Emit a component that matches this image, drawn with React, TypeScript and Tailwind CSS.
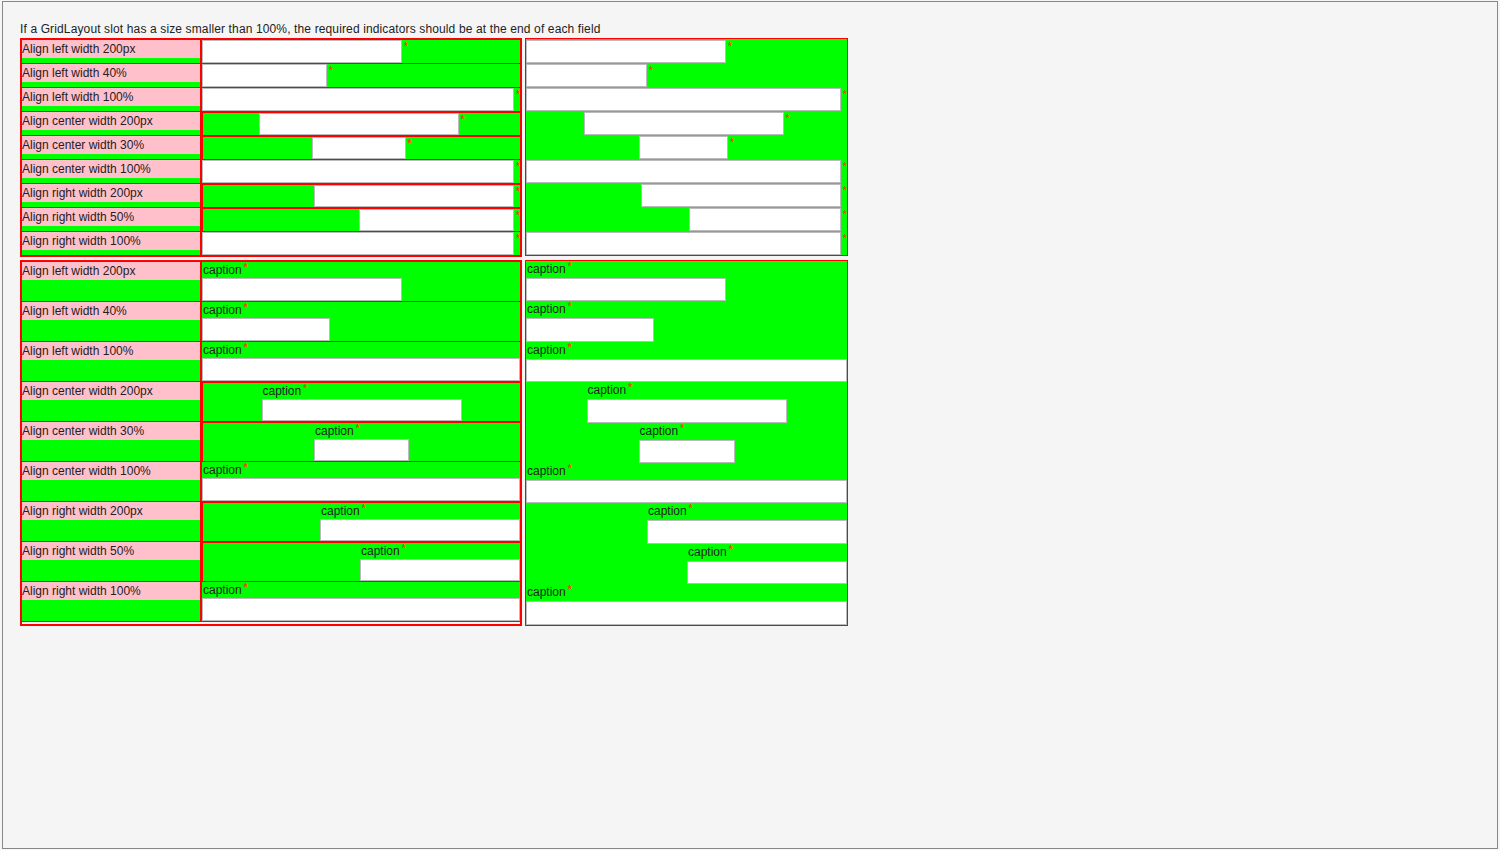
import React from 'react';

type Align = 'left' | 'center' | 'right';

type Row = {
  label: string;
  align: Align;
  full: boolean;
  // field widths for each of the four forms
  w1: string;
  w2: string;
  w3: string;
  w4: string;
};

const rows: Row[] = [
  { label: 'Align left width 200px', align: 'left', full: false, w1: 'w-[200px]', w2: 'w-[200px]', w3: 'w-[200px]', w4: 'w-[200px]' },
  { label: 'Align left width 40%', align: 'left', full: false, w1: 'w-[125px]', w2: 'w-[121px]', w3: 'w-[128px]', w4: 'w-[128px]' },
  { label: 'Align left width 100%', align: 'left', full: true, w1: 'flex-1', w2: 'flex-1', w3: 'w-full', w4: 'w-full' },
  { label: 'Align center width 200px', align: 'center', full: false, w1: 'w-[200px]', w2: 'w-[200px]', w3: 'w-[200px]', w4: 'w-[200px]' },
  { label: 'Align center width 30%', align: 'center', full: false, w1: 'w-[94px]', w2: 'w-[89px]', w3: 'w-[95px]', w4: 'w-[96px]' },
  { label: 'Align center width 100%', align: 'center', full: true, w1: 'flex-1', w2: 'flex-1', w3: 'w-full', w4: 'w-full' },
  { label: 'Align right width 200px', align: 'right', full: false, w1: 'w-[200px]', w2: 'w-[200px]', w3: 'w-[200px]', w4: 'w-[200px]' },
  { label: 'Align right width 50%', align: 'right', full: false, w1: 'w-[155px]', w2: 'w-[152px]', w3: 'w-[160px]', w4: 'w-[160px]' },
  { label: 'Align right width 100%', align: 'right', full: true, w1: 'flex-1', w2: 'flex-1', w3: 'w-full', w4: 'w-full' },
];

const justify: Record<Align, string> = {
  left: 'justify-start',
  center: 'justify-center',
  right: 'justify-end',
};

const items: Record<Align, string> = {
  left: 'items-start',
  center: 'items-center',
  right: 'items-end',
};

// small required indicator
const Star = ({ side }: { side?: boolean }) =>
  side ? (
    <span className="w-[6px] shrink-0 pl-[2px] pt-[2px] text-[10px] font-bold leading-none text-[#f40]">*</span>
  ) : (
    <span className="relative -top-[3px] ml-[2px] text-[10px] font-bold leading-none text-[#f40]">*</span>
  );

const Field = ({ className = '' }: { className?: string }) => (
  <div className={`shrink-0 border border-[#bbb] bg-white ${className}`} />
);

// Top left: caption column + field with indicator at the side
const FormSideLeft = () => (
  <div className="flex w-[502px] flex-col border-2 border-[#f00]">
    {rows.map((r, i) => {
      const last = i === rows.length - 1;
      const boxed = r.align !== 'left' && !r.full;
      return (
        <div key={r.label} className={`flex ${last ? 'h-[23px]' : 'h-[24px] border-b border-[#f00]'}`}>
          <div className="flex w-[178px] flex-col">
            <div className="h-[18px] bg-[#ffc0cb] leading-[18px]">{r.label}</div>
            <div className="flex-1 bg-[#0f0]" />
          </div>
          <div className="w-[2px] bg-[#f00]" />
          <div className={`flex flex-1 bg-[#0f0] ${justify[r.align]} ${boxed ? 'border-t border-l border-[#f00]' : ''}`}>
            <Field className={`h-full ${r.w1}`} />
            <Star side />
          </div>
        </div>
      );
    })}
  </div>
);

// Top right: fields only
const FormSideRight = () => (
  <div className="flex w-[323px] flex-col gap-px border border-[#f00] bg-[#0f0] pt-px">
    {rows.map((r) => (
      <div key={r.label} className={`flex h-[23px] ${justify[r.align]}`}>
        <Field className={`h-full ${r.w2}`} />
        <Star side />
      </div>
    ))}
  </div>
);

// Bottom left: caption column + captioned fields
const FormCaptionLeft = () => (
  <div className="flex w-[502px] flex-col border-2 border-[#f00] pb-[2px]">
    {rows.map((r) => {
      const boxed = r.align !== 'left' && !r.full;
      return (
        <div key={r.label} className="flex h-[40px] border-b border-[#f00]">
          <div className="flex w-[178px] flex-col">
            <div className="h-[18px] bg-[#ffc0cb] leading-[18px]">{r.label}</div>
            <div className="flex-1 bg-[#0f0]" />
          </div>
          <div className="w-[2px] bg-[#f00]" />
          <div className={`flex flex-1 flex-col bg-[#0f0] ${items[r.align]} ${boxed ? 'border-t border-l border-[#f00]' : ''}`}>
            <div className={`flex h-full flex-col ${r.w3}`}>
              <div className="h-[16px] shrink-0 pl-px leading-[17px]">
                caption
                <Star />
              </div>
              <Field className="w-full flex-1" />
            </div>
          </div>
        </div>
      );
    })}
  </div>
);

// Bottom right: captioned fields only
const FormCaptionRight = () => (
  <div className="flex w-[323px] flex-col border border-[#f00] bg-[#0f0]">
    {rows.map((r) => (
      <div key={r.label} className={`flex h-[40.4px] flex-col ${items[r.align]}`}>
        <div className={`flex h-full flex-col ${r.w4}`}>
          <div className="h-[17px] shrink-0 pl-px leading-[17px]">
            caption
            <Star />
          </div>
          <Field className="w-full flex-1" />
        </div>
      </div>
    ))}
  </div>
);

export default function App() {
  return (
    <div
      className="h-[850px] w-full bg-[#f5f5f5] px-[2px] py-px text-[12px] text-[#222]"
      style={{ fontFamily: '"Liberation Sans", Arial, sans-serif' }}
    >
      <div className="h-full border border-[#888] pl-[17px] pt-[20px]">
        <div className="mb-[1px] leading-[15px] tracking-[0.13px]">
          If a GridLayout slot has a size smaller than 100%, the required indicators should be at the end of each field
        </div>
        <div className="flex flex-col gap-[3px]">
          <div className="flex items-start gap-[3px]">
            <FormSideLeft />
            <FormSideRight />
          </div>
          <div className="flex items-start gap-[3px]">
            <FormCaptionLeft />
            <FormCaptionRight />
          </div>
        </div>
      </div>
    </div>
  );
}
